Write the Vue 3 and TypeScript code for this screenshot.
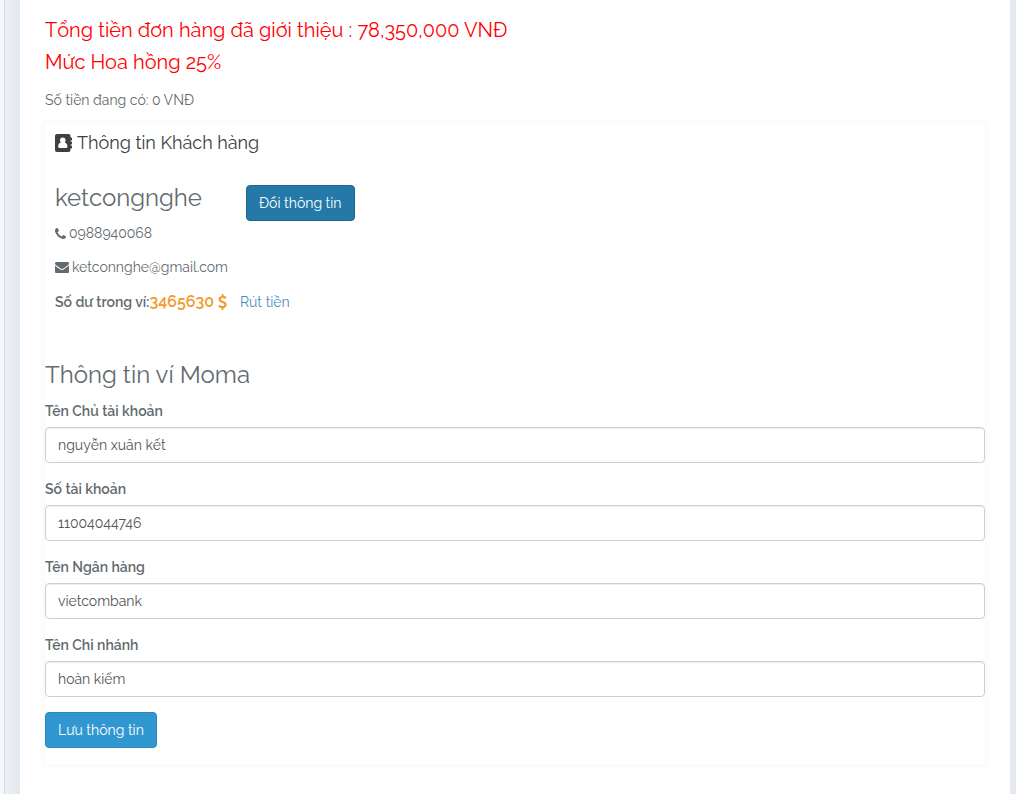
<script setup lang="ts">
import { reactive } from 'vue'

interface Field {
  id: string
  label: string
  value: string
}

const fields = reactive<Field[]>([
  { id: 'owner', label: 'Tên Chủ tài khoản', value: 'nguyễn xuân kết' },
  { id: 'number', label: 'Số tài khoản', value: '11004044746' },
  { id: 'bank', label: 'Tên Ngân hàng', value: 'vietcombank' },
  { id: 'branch', label: 'Tên Chi nhánh', value: 'hoàn kiếm' },
])
</script>

<template>
  <div class="page">
    <main class="panel">
      <h2 class="total">Tổng tiền đơn hàng đã giới thiệu : 78,350,000 VNĐ</h2>
      <h2 class="total">Mức Hoa hồng 25%</h2>
      <p class="available">Số tiền đang có: 0 VNĐ</p>

      <section class="card">
        <div class="customer">
          <h3 class="card-title">
            <svg class="book" viewBox="0 0 17 18" aria-hidden="true">
              <path fill="currentColor" fill-rule="evenodd" d="M2 0H13.500Q15.500 0 15.500 2V3.500H16.300Q17 3.500 17 4.200V5.800Q17 6.500 16.300 6.500H15.500V7.500H16.300Q17 7.500 17 8.200V9.800Q17 10.500 16.300 10.500H15.500V11.500H16.300Q17 11.500 17 12.200V13.800Q17 14.500 16.300 14.500H15.500V16Q15.500 18 13.500 18H2Q0 18 0 16V2Q0 0 2 0ZM7.800 3.500C6 3.500 5 4.700 5 6.300C5 7.200 5.300 8 5.800 8.700C4 8.700 3.200 10.500 3.200 12.500Q3.200 14 4.600 14H11Q12.400 14 12.400 12.500C12.400 10.500 11.600 8.700 9.800 8.700C10.300 8 10.600 7.200 10.600 6.300C10.600 4.700 9.600 3.500 7.800 3.500Z" />
            </svg>
            Thông tin Khách hàng
          </h3>
          <div class="profile">
            <div class="details">
              <h3 class="name">ketcongnghe</h3>
              <p class="contact">
                <svg class="phone" viewBox="0 128 1408 1408" aria-hidden="true">
                  <path fill="currentColor" d="M1408 1240q0 27-10 70.500t-21 68.500q-21 50-122 106-94 51-186 51-27 0-53-3.500t-57.500-12.500-47-14.500-55.500-20.500-49-18q-98-35-175-83-127-79-264-216t-216-264q-48-77-83-175-3-9-18-49t-20.500-55.500-14.500-47-12.500-57.500-3.500-53q0-92 51-186 56-101 106-122 25-11 68.500-21t70.500-10q14 0 21 3 18 6 53 76 11 19 30 54t35 63.500 31 53.500q3 4 17.500 25t21.500 35.500 7 28.500q0 20-28.500 50t-62 55-62 53-28.500 46q0 9 5 22.500t8.500 20.500 14 24 11.500 19q76 137 174 235t235 174q2 1 19 11.500t24 14 20.500 8.500 22.500 5q18 0 46-28.500t53-62 55-62 50-28.500q14 0 28.500 7t35.500 21.500 25 17.500q25 15 53.500 31t63.500 35 54 30q70 35 76 53 3 7 3 21z" />
                </svg>
                0988940068
              </p>
              <p class="contact">
                <svg class="mail" viewBox="0 256 1792 1408" aria-hidden="true">
                  <path fill="currentColor" d="M1792 710v794q0 66-47 113t-113 47h-1472q-66 0-113-47t-47-113v-794q44 49 101 87 362 246 497 345 57 42 92.500 65.500t94.500 48 110 24.500h2q51 0 110-24.500t94.500-48 92.500-65.500q170-123 498-345 57-39 100-87zm0-294q0 79-49 151t-122 123q-376 261-468 325-10 7-42.500 31t-54 38.500-52 32.500-57.500 27-50 9h-2q-23 0-50-9t-57.500-27-52-32.500-54-38.500-42.500-31q-91-64-262-182.500t-205-142.500q-62-42-117-115.500t-55-136.500q0-78 41.500-130t118.500-52h1472q65 0 112.500 47t47.500 113z" />
                </svg>
                ketconnghe@gmail.com
              </p>
            </div>
            <button class="btn change" type="button">Đổi thông tin</button>
          </div>
          <p class="balance">
            <strong>Số dư trong ví:</strong>
            <strong class="amount">3465630
              <svg class="dollar" viewBox="400 0 992 1792" role="img" aria-label="$">
                <path fill="currentColor" d="M1362 1185q0 153-99.500 263.500t-258.500 136.500v175q0 14-9 23t-23 9h-135q-13 0-22.500-9.500t-9.500-22.500v-175q-66-9-127.500-31t-101.500-44.500-74-48-46.500-37.500-17.500-18q-17-21-2-41l103-135q7-10 23-12 15-2 24 9l2 2q113 99 243 125 37 8 74 8 81 0 142.500-43t61.500-122q0-28-15-53t-33.500-42-58.500-37.500-66-32-80-32.500q-39-16-61.500-25t-61.500-26.500-62.500-31-56.500-35.500-53.500-42.500-43.500-49-35.500-58-21-66.500-8.500-78q0-138 98-242t255-134v-180q0-13 9.500-22.500t22.500-9.500h135q14 0 23 9t9 23v176q57 6 110.500 23t87 33.500 63.500 37.500 39 29 15 14q17 18 5 38l-81 146q-8 15-23 16-14 3-27-7-3-3-14.500-12t-39-26.500-58.500-32-74.500-26-85.500-11.500q-95 0-155 43t-60 111q0 26 8.500 48t29.500 41.500 39.500 33 56 31 60.500 27 70 27.500q53 20 81 31.500t76 35 75.500 42.500 62 50 53 63.500 31.500 76.500 13 94z" />
              </svg>
            </strong>
            <a class="withdraw" href="#">Rút tiền</a>
          </p>
        </div>

        <form class="wallet" @submit.prevent>
          <h3 class="wallet-title">Thông tin ví Moma</h3>
          <div v-for="field in fields" :key="field.id" class="group">
            <label :for="field.id">{{ field.label }}</label>
            <input :id="field.id" v-model="field.value" type="text" />
          </div>
          <button class="btn save" type="submit">Lưu thông tin</button>
        </form>
      </section>
    </main>
  </div>
</template>

<style>
body {
  margin: 0;
  background: #f5f8fa;
}
</style>

<style scoped>
* {
  box-sizing: border-box;
}

.page {
  min-height: 100vh;
  margin-left: 4px;
  padding: 0 6px 0 15px;
  border-left: 1px solid #d3dae0;
  background: linear-gradient(to right, #edf1f5, #e4e8f0 15px);
  color: #636b6f;
  font-family: Raleway, Lato, "Open Sans", sans-serif;
  font-size: 14px;
  font-variant-ligatures: no-contextual;
  font-variant-numeric: oldstyle-nums;
  font-weight: 400;
  line-height: 22px;
}

.panel {
  min-height: 100vh;
  padding: 14px 25px 29px;
  background: #fff;
}

h2,
h3,
p {
  margin: 0;
  font-weight: 400;
}

.total {
  color: #f00;
  font-size: 20px;
  line-height: 32px;
}

.available {
  margin-top: 11px;
}

.card {
  margin-top: 12px;
  padding-bottom: 16px;
  box-shadow: 0 0 6px 1px rgba(0, 0, 0, 0.04);
}

.customer {
  padding: 8px 10px 0;
}

.card-title {
  display: flex;
  align-items: center;
  gap: 5px;
  color: #3b4045;
  font-size: 18px;
  line-height: 24px;
}

.book {
  width: 17px;
  height: 18px;
}

.profile {
  display: flex;
  align-items: flex-start;
  margin-top: 30px;
}

.details {
  width: 191px;
}

.name,
.wallet-title {
  font-size: 24px;
  line-height: 26px;
}

.contact {
  display: flex;
  align-items: center;
  gap: 3px;
  margin-top: 12px;
}

.name + .contact {
  margin-top: 11px;
}

.phone {
  width: 11px;
  height: 11px;
}

.mail {
  width: 14px;
  height: 11px;
}

.btn {
  height: 36px;
  padding: 0 12px;
  border: 1px solid #2a88bd;
  border-radius: 4px;
  background: #3097d1;
  color: #fff;
  font: inherit;
  white-space: nowrap;
  cursor: pointer;
}

.change {
  border-color: #1f648b;
  background: #2579a9;
}

.balance {
  display: flex;
  align-items: center;
  margin-top: 13px;
}

strong {
  font-weight: 600;
}

.amount {
  display: flex;
  align-items: center;
  gap: 4px;
  color: #f39a2b;
  font-size: 16px;
}

.dollar {
  width: 9px;
  height: 16px;
}

.withdraw {
  margin-left: 13px;
  color: #4a8fc4;
  text-decoration: none;
}

.wallet {
  margin-top: 49px;
}

.wallet-title {
  margin-bottom: 12px;
}

.group {
  margin-bottom: 15px;
}

label {
  display: block;
  font-weight: 600;
}

input {
  display: block;
  width: 100%;
  height: 36px;
  margin-top: 5px;
  padding: 0 12px;
  border: 1px solid #ccd0d2;
  border-radius: 4px;
  background: #fff;
  box-shadow: inset 0 1px 1px rgba(0, 0, 0, 0.075);
  color: #555;
  font: inherit;
  font-variant-ligatures: no-contextual;
  font-variant-numeric: oldstyle-nums;
}
</style>
